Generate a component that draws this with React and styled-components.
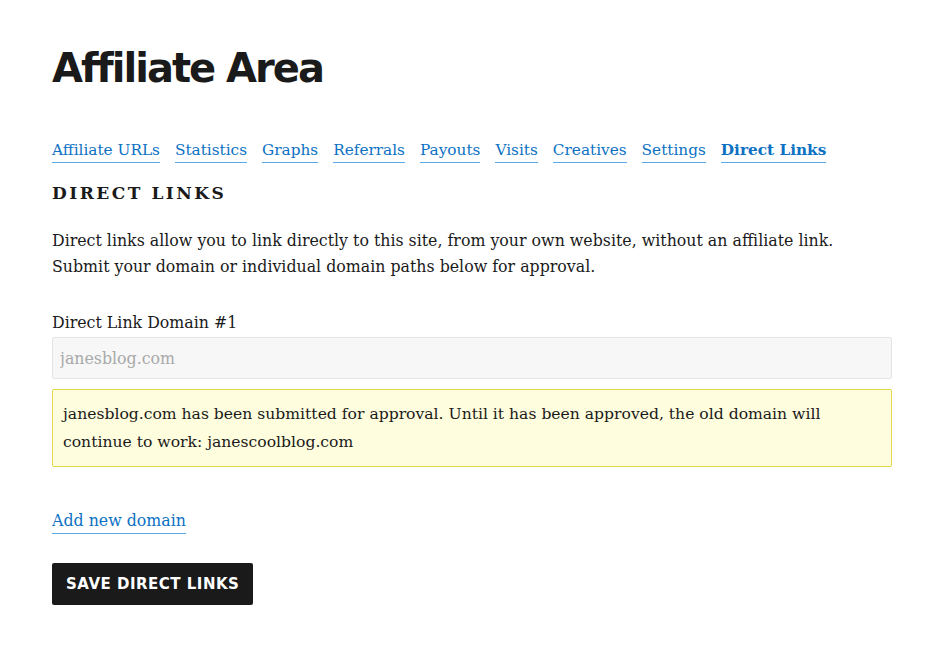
import React from 'react';
import styled, { createGlobalStyle } from 'styled-components';

const GlobalStyle = createGlobalStyle`
  body {
    margin: 0;
    background: #fff;
    color: #1a1a1a;
    font-family: "DejaVu Serif", "Liberation Serif", serif;
  }
`;

const tabs = [
  'Affiliate URLs',
  'Statistics',
  'Graphs',
  'Referrals',
  'Payouts',
  'Visits',
  'Creatives',
  'Settings',
  'Direct Links',
];

const App = () => {
  return (
    <>
      <GlobalStyle />
      <Page>
        <Title>Affiliate Area</Title>
        <Tabs>
          {tabs.map((t) => (
            <Tab key={t} href="#" active={t === 'Direct Links' ? 1 : 0}>{t}</Tab>
          ))}
        </Tabs>
        <SectionTitle>Direct Links</SectionTitle>
        <Intro>
          Direct links allow you to link directly to this site, from your own website, without an affiliate link.
          <br />
          Submit your domain or individual domain paths below for approval.
        </Intro>
        <Field>
          <Label>Direct Link Domain #1</Label>
          <Input type="text" placeholder="janesblog.com" disabled />
        </Field>
        <Notice>
          janesblog.com has been submitted for approval. Until it has been approved, the old domain will continue to work: janescoolblog.com
        </Notice>
        <AddLink href="#">Add new domain</AddLink>
        <SaveBtn type="button">Save Direct Links</SaveBtn>
      </Page>
    </>
  );
};

export default App;

const Page = styled.div`
  width: 840px;
  padding: 40px 0 40px 52px;
  display: flex;
  flex-direction: column;
  align-items: flex-start;
`;

const Title = styled.h1`
  margin: 0;
  font-family: "DejaVu Sans", "Liberation Sans", sans-serif;
  font-weight: 700;
  font-size: 40px;
  line-height: 56px;
  letter-spacing: -2px;
  color: #1a1a1a;
`;

const Tabs = styled.nav`
  display: flex;
  gap: 15px;
  margin-top: 42px;
`;

const Tab = styled.a`
  font-size: 15.3px;
  line-height: 24px;
  color: #0c71c3;
  text-decoration: none;
  border-bottom: 1px solid #5ba9e8;
  font-weight: ${({ active }) => (active ? 700 : 400)};
`;

const SectionTitle = styled.h3`
  margin: 16px 0 0;
  font-size: 17px;
  line-height: 28px;
  font-weight: 700;
  text-transform: uppercase;
  letter-spacing: 2.5px;
  color: #1a1a1a;
`;

const Intro = styled.p`
  margin: 21px 0 0;
  font-size: 15.8px;
  line-height: 26px;
  color: #1a1a1a;
`;

const Field = styled.div`
  width: 100%;
  margin-top: 30px;
  display: flex;
  flex-direction: column;
`;

const Label = styled.label`
  font-size: 15.8px;
  line-height: 26px;
  margin-bottom: 1px;
`;

const Input = styled.input`
  box-sizing: border-box;
  width: 100%;
  height: 42px;
  padding: 0 7px;
  font-family: inherit;
  font-size: 15.8px;
  background: #f7f7f7;
  border: 1px solid #e4e4e4;
  border-radius: 2px;
  &::placeholder {
    color: #a9a9a9;
  }
`;

const Notice = styled.div`
  box-sizing: border-box;
  width: 100%;
  margin-top: 10px;
  padding: 10px 10px 10px;
  background: #fefddd;
  border: 1px solid #e5d94a;
  border-radius: 2px;
  font-size: 15.6px;
  line-height: 28px;
  color: #1a1a1a;
`;

const AddLink = styled.a`
  margin-top: 42px;
  font-size: 15.8px;
  line-height: 24px;
  color: #0c71c3;
  text-decoration: none;
  border-bottom: 1px solid #5ba9e8;
`;

const SaveBtn = styled.button`
  margin-top: 29px;
  height: 42px;
  padding: 0 14px;
  background: #1a1a1a;
  color: #fff;
  border: none;
  border-radius: 2px;
  font-family: "DejaVu Sans", "Liberation Sans", sans-serif;
  font-weight: 700;
  font-size: 15px;
  text-transform: uppercase;
  letter-spacing: 0.5px;
`;
